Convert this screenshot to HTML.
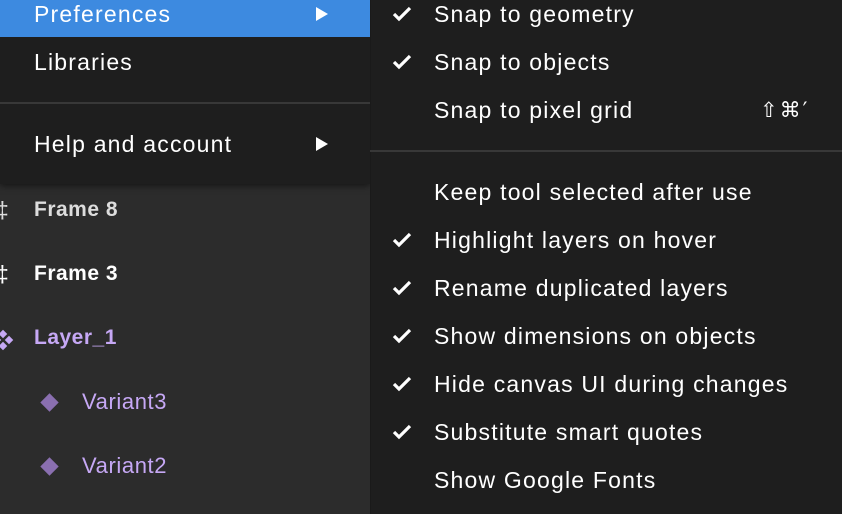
<!DOCTYPE html>
<html><head><style>
*{margin:0;padding:0;box-sizing:border-box}
body{width:842px;height:514px;overflow:hidden;background:#2c2c2c;font-family:"Liberation Sans",sans-serif;position:relative;color:#fff}
.t{position:absolute;font-size:23px;line-height:26px;white-space:nowrap;letter-spacing:1.2px}
#left{position:absolute;left:0;top:0;width:370px;height:184px;background:#1e1e1e;box-shadow:0 2px 6px rgba(0,0,0,.5)}
#hl{position:absolute;left:0;top:0;width:370px;height:37px;background:#3d8ae0}
#right{position:absolute;left:370px;top:0;width:472px;height:514px;background:#1e1e1e;border-left:1px solid #1a1a1a}
.div{position:absolute;height:2px;background:#383838}
.arr{position:absolute;width:0;height:0;border-top:7px solid transparent;border-bottom:7px solid transparent;border-left:12px solid #fff}
.chk{position:absolute;left:392px}
.b{font-weight:bold;font-size:21px;letter-spacing:0.5px}
.v{font-size:22px;letter-spacing:0.6px;color:#c6a8f5}
.dia{position:absolute;width:13px;height:13px;background:#8a6fb0;transform:rotate(45deg)}
.sd{position:absolute;width:6px;height:6px;background:#c6a8f5;transform:rotate(45deg)}
</style></head><body>
<div id="left"><div id="hl"></div>
<div class="div" style="left:0;top:102px;width:370px"></div>
</div>
<div class="t" style="left:34px;top:1px">Preferences</div>
<div class="arr" style="left:316px;top:7px"></div>
<div class="t" style="left:34px;top:49px">Libraries</div>
<div class="t" style="left:34px;top:131px">Help and account</div>
<div class="arr" style="left:316px;top:137px"></div>

<div class="t" style="left:-4px;top:197px;color:#ddd">‡</div>
<div class="t b" style="left:34px;top:197px;color:#ddd">Frame 8</div>
<div class="t" style="left:-4px;top:261px">‡</div>
<div class="t b" style="left:34px;top:261px">Frame 3</div>
<div class="sd" style="left:0px;top:331px"></div>
<div class="sd" style="left:0px;top:343px"></div>
<div class="sd" style="left:6px;top:337px"></div>
<div class="sd" style="left:-6px;top:337px"></div>
<div class="t b" style="left:34px;top:325px;color:#c6a8f5">Layer_1</div>
<div class="dia" style="left:43px;top:396px"></div>
<div class="t v" style="left:82px;top:389px">Variant3</div>
<div class="dia" style="left:43px;top:460px"></div>
<div class="t v" style="left:82px;top:453px">Variant2</div>

<div id="right"></div>
<div class="div" style="left:370px;top:150px;width:472px"></div>
<svg width="0" height="0" style="position:absolute"><defs><symbol id="c" viewBox="0 0 20 16"><path d="M2 8l5 5L18 2" stroke="#fff" stroke-width="3.2" fill="none"/></symbol></defs></svg>
<svg class="chk" style="top:6px" width="20" height="16"><use href="#c"/></svg>
<div class="t" style="left:434px;top:1px">Snap to geometry</div>
<svg class="chk" style="top:54px" width="20" height="16"><use href="#c"/></svg>
<div class="t" style="left:434px;top:49px">Snap to objects</div>
<div class="t" style="left:434px;top:97px">Snap to pixel grid</div>
<div class="t" style="left:760px;top:97px;font-family:'DejaVu Sans',sans-serif;font-size:21px;letter-spacing:2px">⇧⌘′</div>
<div class="t" style="left:434px;top:179px">Keep tool selected after use</div>
<svg class="chk" style="top:232px" width="20" height="16"><use href="#c"/></svg>
<div class="t" style="left:434px;top:227px">Highlight layers on hover</div>
<svg class="chk" style="top:280px" width="20" height="16"><use href="#c"/></svg>
<div class="t" style="left:434px;top:275px">Rename duplicated layers</div>
<svg class="chk" style="top:328px" width="20" height="16"><use href="#c"/></svg>
<div class="t" style="left:434px;top:323px">Show dimensions on objects</div>
<svg class="chk" style="top:376px" width="20" height="16"><use href="#c"/></svg>
<div class="t" style="left:434px;top:371px">Hide canvas UI during changes</div>
<svg class="chk" style="top:424px" width="20" height="16"><use href="#c"/></svg>
<div class="t" style="left:434px;top:419px">Substitute smart quotes</div>
<div class="t" style="left:434px;top:467px">Show Google Fonts</div>
</body></html>
